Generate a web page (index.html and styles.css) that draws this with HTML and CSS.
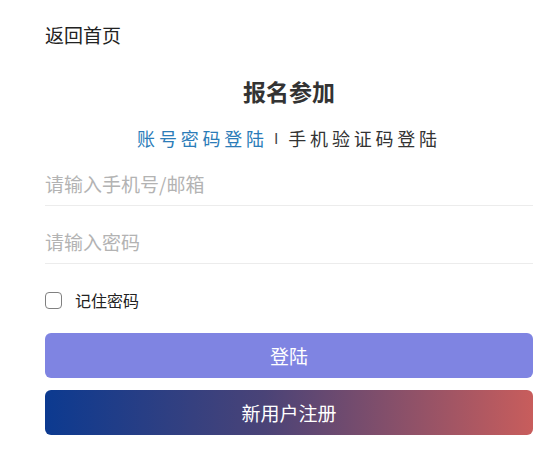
FILE: index.html
```html
<!DOCTYPE html>
<html lang="zh-CN">
  <head>
    <meta charset="UTF-8" />
    <meta name="viewport" content="width=device-width, initial-scale=1.0" />
    <title>报名参加</title>
    <link rel="stylesheet" href="styles.css">
  </head>

  <body>
    <div class="page">
      <a class="back" href="#">返回首页</a>

      <h1 class="title">报名参加</h1>

      <p class="tabs">
        <span class="tab active">账号密码登陆</span>
        <span class="sep">I</span>
        <span class="tab">手机验证码登陆</span>
      </p>

      <form class="login-form">
        <div class="field">
          <input type="text" placeholder="请输入手机号/邮箱" />
        </div>
        <div class="field">
          <input type="password" placeholder="请输入密码" />
        </div>

        <label class="remember">
          <span class="box"></span>
          <span>记住密码</span>
        </label>

        <button type="button" class="btn btn-login">登陆</button>
        <button type="button" class="btn btn-register">新用户注册</button>
      </form>
    </div>
  </body>
</html>
```

FILE: styles.css
```css
html,
body {
  margin: 0;
  padding: 0;
  background: #fff;
}

body {
  font-family: "Noto Sans CJK SC", "Noto Sans", sans-serif;
  color: #222;
}

.page {
  padding: 21px 15px 0 45px;
  display: flex;
  flex-flow: column;
}

.back {
  font-size: 19px;
  line-height: 28px;
  color: #222;
  text-decoration: none;
  align-self: flex-start;
}

.title {
  margin: 26px 0 0;
  font-size: 23px;
  line-height: 32px;
  font-weight: bold;
  color: #333;
  text-align: center;
}

.tabs {
  margin: 18px 0 0;
  font-size: 18px;
  line-height: 26px;
  text-align: center;
  color: #333;
  display: flex;
  justify-content: center;
  align-items: center;
}

.tab {
  letter-spacing: 3.8px;
}

.tab.active {
  color: #2b7cb8;
}

.sep {
  margin: 0 10px 0 6px;
  font-size: 15px;
  color: #444;
}

.login-form {
  margin-top: 14px;
  display: flex;
  flex-flow: column;
}

.field {
  height: 37px;
  padding-bottom: 3px;
  border-bottom: 1px solid #ececec;
  display: flex;
  align-items: center;
}

.field + .field {
  margin-top: 17px;
}

.field input {
  width: 100%;
  border: none;
  outline: none;
  padding: 0;
  font-family: inherit;
  font-size: 19px;
  color: #333;
  background: transparent;
}

.field input::placeholder {
  color: #b3b3b3;
}

.remember {
  margin-top: 24px;
  height: 24px;
  display: flex;
  align-items: center;
  gap: 13px;
  font-size: 16px;
  color: #222;
}

.box {
  width: 15px;
  height: 15px;
  border: 1.5px solid #808080;
  border-radius: 4px;
}

.btn {
  height: 45px;
  border: none;
  border-radius: 6px;
  color: #fff;
  font-family: inherit;
  font-size: 19px;
  cursor: pointer;
}

.btn-login {
  margin-top: 21px;
  background: #7f84e2;
}

.btn-register {
  margin-top: 12px;
  background: linear-gradient(90deg, #0c3a90, #4a4377 45%, #c85d5c);
}
```
